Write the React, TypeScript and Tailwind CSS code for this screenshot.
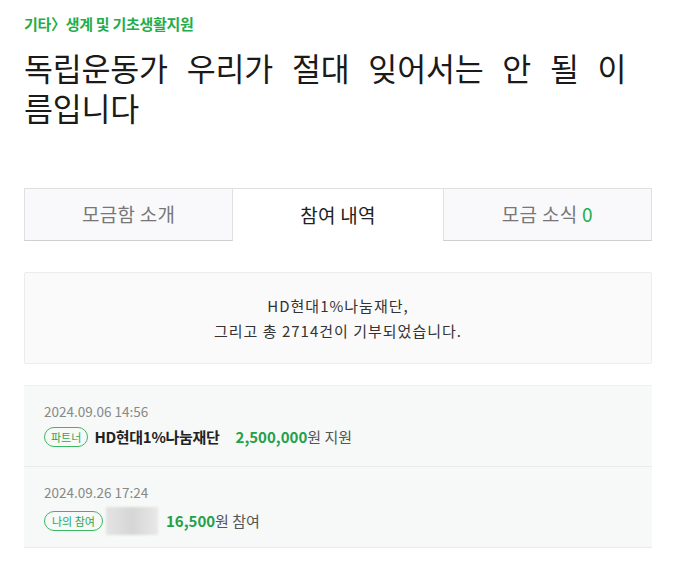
import React from "react";

const font = { fontFamily: '"Noto Sans CJK KR", "Noto Sans", sans-serif' };

export default function App() {
  return (
    <div className="bg-white w-[681px] min-h-[563px] pl-[24px] pr-[29px] pt-[12px]" style={font}>
      <div className="text-[15px] font-bold text-[#1fae4b] leading-[24px] tracking-[-0.3px]">
        기타〉생계 및 기초생활지원
      </div>
      <h1 className="mt-[11px] pr-[10px] text-[31.5px] leading-[40px] text-[#1a1a1a] font-normal tracking-[-0.2px] [word-spacing:12px]">
        독립운동가 우리가 절대 잊어서는 안 될 이름입니다
      </h1>

      <div className="mt-[61px] grid grid-cols-3 h-[53px] text-[19px] tracking-[0.3px]">
        <div className="flex items-center justify-center bg-[#f9f9fb] border border-[#e0e0e0] border-b-[#cfcfcf] text-[#777]">
          모금함 소개
        </div>
        <div className="flex items-center justify-center bg-white border-t border-[#e0e0e0] text-[#222]">
          참여 내역
        </div>
        <div className="flex items-center justify-center bg-[#f9f9fb] border border-[#e0e0e0] border-b-[#cfcfcf] text-[#777]">
          모금 소식&nbsp;<span className="text-[#1fae4b]">0</span>
        </div>
      </div>

      <div className="mt-[31px] h-[92px] bg-[#fafafa] border border-[#ececec] rounded-[2px] flex flex-col items-center justify-center text-[15px] leading-[25px] text-[#333] tracking-[1px]">
        <div>HD현대1%나눔재단,</div>
        <div>그리고 총 2714건이 기부되었습니다.</div>
      </div>

      <div className="mt-[21px] bg-[#f6f9f7] border-t border-[#eef1ef]">
        <div className="h-[81px] border-b border-[#e8ece9] pl-[20px] pt-[15px]">
          <div className="text-[13.5px] text-[#888] leading-[20px]">2024.09.06 14:56</div>
          <div className="mt-[5px] flex items-center">
            <span className="h-[20px] px-[6px] rounded-full border border-[#3cb862] text-[#2da650] text-[11px] flex items-center leading-none">
              파트너
            </span>
            <span className="ml-[6px] text-[15px] font-bold text-[#222] tracking-[-0.3px]">HD현대1%나눔재단</span>
            <span className="ml-[16px] text-[15px] font-bold text-[#23a04c]">2,500,000</span>
            <span className="text-[15px] text-[#555]">원 지원</span>
          </div>
        </div>
        <div className="h-[81px] border-b border-[#e8ece9] pl-[20px] pt-[15px]">
          <div className="text-[13.5px] text-[#888] leading-[20px]">2024.09.26 17:24</div>
          <div className="mt-[5px] flex items-center">
            <span className="h-[20px] px-[7px] rounded-full border border-[#3cb862] text-[#2da650] text-[11px] flex items-center leading-none">
              나의 참여
            </span>
            <span className="ml-[3px] w-[52px] h-[28px] bg-gradient-to-r from-[#e4e4e4] via-[#d6d6d6] to-[#e8e8e8] blur-[1px]"></span>
            <span className="ml-[8px] text-[15px] font-bold text-[#23a04c]">16,500</span>
            <span className="text-[15px] text-[#555]">원 참여</span>
          </div>
        </div>
      </div>
    </div>
  );
}
